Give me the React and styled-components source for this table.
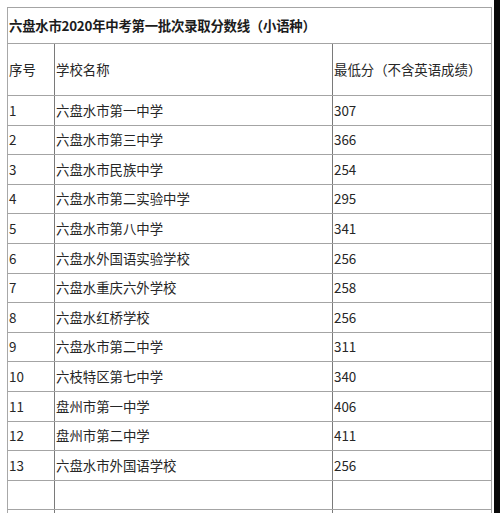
import React from 'react'
import styled, { createGlobalStyle } from 'styled-components'

const GlobalStyle = createGlobalStyle`
  html, body {
    margin: 0;
    padding: 0;
    background: #fff;
  }
  body {
    font-family: "Noto Sans CJK SC", "Noto Sans", sans-serif;
    color: #222;
  }
`

const rows = [
  ['1', '六盘水市第一中学', '307'],
  ['2', '六盘水市第三中学', '366'],
  ['3', '六盘水市民族中学', '254'],
  ['4', '六盘水市第二实验中学', '295'],
  ['5', '六盘水市第八中学', '341'],
  ['6', '六盘水外国语实验学校', '256'],
  ['7', '六盘水重庆六外学校', '258'],
  ['8', '六盘水红桥学校', '256'],
  ['9', '六盘水市第二中学', '311'],
  ['10', '六枝特区第七中学', '340'],
  ['11', '盘州市第一中学', '406'],
  ['12', '盘州市第二中学', '411'],
  ['13', '六盘水市外国语学校', '256'],
  ['', '', ''],
  ['', '', ''],
]

const Page = styled.div`
  display: flex;
  height: 513px;
  overflow: hidden;
`

const Sheet = styled.div`
  width: 494px;
  padding: 7px 0 0 7px;
  box-sizing: border-box;
  overflow: hidden;
`

const EdgeStrip = styled.div`
  flex: 1;
  background: #0a0a0a;
`

const Table = styled.table`
  width: 484px;
  border-collapse: collapse;
  table-layout: fixed;
  border: 1px solid #a8a8a8;
  font-size: 13.4px;
  line-height: 1;
`

const Col = styled.col`
  width: ${props => props.w}px;
`

const Cell = styled.td`
  height: ${props => props.h || 28.6}px;
  padding: 0 0 0 1px;
  vertical-align: middle;
  white-space: nowrap;
  overflow: hidden;
  color: #262626;
  border-top: 1px solid #a4a4a4;
  border-bottom: 1px solid #a4a4a4;
  border-left: 1px solid #7a7a7a;
  &:first-child {
    border-left: 1px solid #a8a8a8;
  }
`

const TitleCell = styled(Cell)`
  font-weight: 700;
  color: #1c1c1c;
  letter-spacing: -0.25px;
`

export default function App() {
  return (
    <Page>
      <GlobalStyle />
      <Sheet>
        <Table>
          <colgroup>
            <Col w={47} />
            <Col w={278} />
            <Col w={159} />
          </colgroup>
          <tbody>
            <tr>
              <TitleCell colSpan={3} h={35}>
                六盘水市2020年中考第一批次录取分数线（小语种）
              </TitleCell>
            </tr>
            <tr>
              <Cell h={51}>序号</Cell>
              <Cell h={51}>学校名称</Cell>
              <Cell h={51}>最低分（不含英语成绩）</Cell>
            </tr>
            {rows.map((row, i) => (
              <tr key={i}>
                {row.map((text, j) => (
                  <Cell key={j}>{text}</Cell>
                ))}
              </tr>
            ))}
          </tbody>
        </Table>
      </Sheet>
      <EdgeStrip />
    </Page>
  )
}
